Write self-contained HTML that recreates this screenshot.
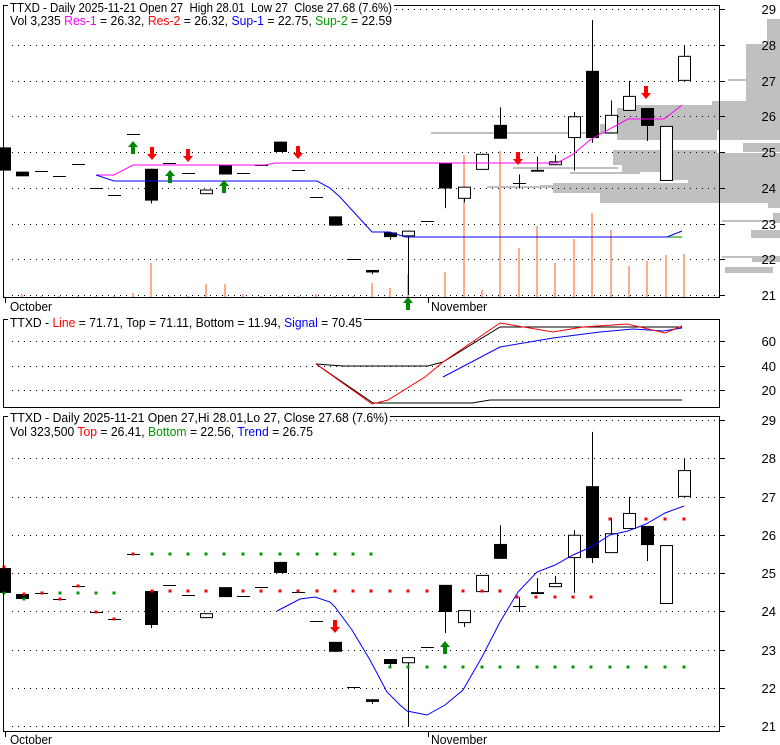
<!DOCTYPE html>
<html><head><meta charset="utf-8"><style>
html,body{margin:0;padding:0;background:#fff;}
svg{display:block;font-family:"Liberation Sans",Arial,sans-serif;}
</style></head><body>
<svg id="s" width="780" height="745" viewBox="0 0 780 745" xmlns="http://www.w3.org/2000/svg">
<g id="g0" fill="#c0c0c0">
<rect x="767" y="19" width="13" height="25"/>
<rect x="746" y="44" width="34" height="57"/>
<rect x="728" y="79" width="18" height="2"/>
<rect x="712" y="101" width="68" height="4"/>
<rect x="632" y="105" width="148" height="3"/>
<rect x="617" y="108" width="163" height="22"/>
<rect x="600" y="124" width="20" height="8"/>
<rect x="617" y="130" width="100" height="10"/>
<rect x="720" y="130" width="60" height="10"/>
<rect x="743" y="143" width="37" height="9"/>
<rect x="613" y="150" width="104" height="3"/>
<rect x="613" y="153" width="167" height="12"/>
<rect x="622" y="165" width="158" height="7"/>
<rect x="673" y="172" width="107" height="8"/>
<rect x="688" y="180" width="92" height="3"/>
<rect x="553" y="183" width="227" height="10"/>
<rect x="600" y="193" width="180" height="10"/>
<rect x="768" y="203" width="12" height="5"/>
<rect x="773" y="213" width="7" height="10"/>
<rect x="722" y="220" width="51" height="2"/>
<rect x="751" y="230" width="29" height="8"/>
<rect x="722" y="256" width="58" height="2"/>
<rect x="752" y="258" width="28" height="4"/>
<rect x="725" y="267" width="48" height="6"/>
<rect x="431" y="132" width="220" height="2"/>
<rect x="513" y="167" width="105" height="2"/>
<rect x="570" y="172" width="70" height="2"/>
<rect x="487" y="186" width="113" height="2"/>
<rect x="540" y="185" width="20" height="3"/>
</g>
<g id="main"></g>
<g font-size="13" fill="#000">
<rect x="8" y="0" width="386" height="12" fill="#fff"/>
<text x="10" y="12" textLength="382" lengthAdjust="spacingAndGlyphs" xml:space="preserve">TTXD - Daily 2025-11-21 Open 27  High 28.01  Low 27  Close 27.68 (7.6%)</text>
<text x="10" y="25" textLength="382" lengthAdjust="spacingAndGlyphs">Vol 3,235 <tspan fill="#ff00ff">Res-1</tspan> = 26.32, <tspan fill="#ff0000">Res-2</tspan> = 26.32, <tspan fill="#0000ff">Sup-1</tspan> = 22.75, <tspan fill="#009900">Sup-2</tspan> = 22.59</text>
<rect x="8" y="314" width="356" height="12" fill="#fff"/>
<text x="10" y="327" textLength="352" lengthAdjust="spacingAndGlyphs">TTXD - <tspan fill="#ff0000">Line</tspan> = 71.71, Top = 71.11, Bottom = 11.94, <tspan fill="#0000ff">Signal</tspan> = 70.45</text>
<rect x="8" y="410" width="382" height="12" fill="#fff"/>
<text x="10" y="422" textLength="378" lengthAdjust="spacingAndGlyphs">TTXD - Daily 2025-11-21 Open 27,Hi 28.01,Lo 27, Close 27.68 (7.6%)</text>
<text x="10" y="436" textLength="303" lengthAdjust="spacingAndGlyphs">Vol 323,500 <tspan fill="#ff0000">Top</tspan> = 26.41, <tspan fill="#009900">Bottom</tspan> = 22.56, <tspan fill="#0000ff">Trend</tspan> = 26.75</text>
<text x="10" y="311" textLength="42" lengthAdjust="spacingAndGlyphs">October</text>
<text x="431" y="311" textLength="56" lengthAdjust="spacingAndGlyphs">November</text>
<text x="10" y="744" textLength="42" lengthAdjust="spacingAndGlyphs">October</text>
<text x="431" y="744" textLength="56" lengthAdjust="spacingAndGlyphs">November</text>
</g>
<g id="lab" font-size="13" text-anchor="end"></g>
</svg>
<script>
var NS="http://www.w3.org/2000/svg",M=document.getElementById('main'),L=document.getElementById('lab');
function el(t,a,p){var e=document.createElementNS(NS,t);for(var k in a)e.setAttribute(k,a[k]);(p||M).appendChild(e);return e;}
function yt(p){return 9+(29-p)*35.75;}
function yb(p){return 420+(29-p)*38.25;}
for(var p=21;p<=29;p++){
 el('line',{x1:12,x2:717,y1:Math.round(yt(p))+.5,y2:Math.round(yt(p))+.5,stroke:'#000','stroke-dasharray':'1,5'});
 el('line',{x1:12,x2:717,y1:Math.round(yb(p))+.5,y2:Math.round(yb(p))+.5,stroke:'#000','stroke-dasharray':'1,5'});
 el('line',{x1:719,x2:725,y1:Math.round(yt(p))+.5,y2:Math.round(yt(p))+.5,stroke:'#000'});
 el('line',{x1:719,x2:725,y1:Math.round(yb(p))+.5,y2:Math.round(yb(p))+.5,stroke:'#000'});
 var t=el('text',{x:776,y:Math.round(yt(p))+5},L);t.textContent=p;
 t=el('text',{x:776,y:Math.round(yb(p))+5},L);t.textContent=p;
}
[[60,341],[40,366],[20,390]].forEach(function(a){
 el('line',{x1:12,x2:717,y1:a[1]+.5,y2:a[1]+.5,stroke:'#000','stroke-dasharray':'1,5'});
 el('line',{x1:719,x2:725,y1:a[1]+.5,y2:a[1]+.5,stroke:'#000'});
 var t=el('text',{x:776,y:a[1]+5},L);t.textContent=a[0];
});
var vol=[296,294,296,296,296,296,296,293,263,296,296,284,284,294,296,296,296,294,296,296,283,288,274,297,272,155,290,151,248,226,263,239,213,230,266,261,255,254];
function X(i){return Math.round(4+18.38*i);}
vol.forEach(function(v,i){el('rect',{x:X(i)-1,y:v,width:2,height:297-v,fill:'#ffab8c'});});
var C=[[25.13,24.48],[24.45,24.32],[24.48,24.48],[24.32,24.32],[24.66,24.66],[23.98,23.98],[23.8,23.8],[25.5,25.5],[24.53,23.64,0,23.56],[24.69,24.69],[24.42,24.42],[23.82,23.95],[24.63,24.37],[24.4,24.4],[24.63,24.63],[25.29,25.0],[24.5,24.5],[23.74,23.74],[23.2,22.94],[22.02,22.02],[21.7,21.63,0,21.58],[22.75,22.62,0,22.55],[22.64,22.8,0,21.0],[23.07,23.07],[24.69,23.98,0,23.43],[23.69,24.03,0,23.59],[24.5,24.95],[25.76,25.37,26.25],[24.14,24.14,24.37,23.98],[24.45,24.5,24.87],[24.63,24.74,24.92],[25.39,26.0,26.12,24.48],[27.27,25.39,28.69,25.26],[25.52,26.04,26.44],[26.15,26.57,26.99],[26.23,25.73,0,25.31],[24.19,25.73],[26.99,27.69,27.98]];
function candles(Y){
 C.forEach(function(c,i){
  var x=X(i),o=c[0],cl=c[1],h=c[2]||Math.max(o,cl),l=c[3]||Math.min(o,cl);
  el('line',{x1:x+.5,x2:x+.5,y1:Y(h),y2:Y(l),stroke:'#000'});
  var t=Y(Math.max(o,cl)),b=Y(Math.min(o,cl));
  if(b-t<1.5){el('line',{x1:x-6,x2:x+7,y1:Math.round(t)+.5,y2:Math.round(t)+.5,stroke:'#000'});}
  else if(cl<o) el('rect',{x:x-6,y:t,width:13,height:b-t,fill:'#000'});
  else el('rect',{x:x-6+.5,y:t+.5,width:12,height:b-t-1,fill:'#fff',stroke:'#000'});
 });
}
candles(yt);candles(yb);
function pl(pts,col,w){el('polyline',{points:pts,fill:'none',stroke:col,'stroke-width':w||1});}
pl('96,175 114,175 133,165 265,165 275,163 557,163 572,155 590,140 604,132 617,125 628,119 664,119 682,105','#ff00ff');
pl('96,175 114,181 317,181 330,188 340,197 372,232 390,232 405,237 667,237','#0000ff');
pl('667,237 682,237','#008800');pl('667,237 682,231','#0000ff');
function up(x,y,col){el('path',{d:'M'+x+' '+y+'l-5 6h3v7h4v-7h3z',fill:col||'#008800'});}
function dn(x,y,col){el('path',{d:'M'+x+' '+(y+13)+'l-5 -6h3v-7h4v7h3z',fill:col||'#ff0000'});}
up(133,141);up(170,170);up(224,180);up(408,297);
dn(152,147);dn(188,149);dn(298,146);dn(518,152);dn(646,86);
pl('316,364 343,366 428,366 443,362 500,327 682,327','#000');
pl('316,364 373,403 472,403 490,400 682,400','#000');
pl('443,377 500,347 553,338 600,332 633,329 663,331 682,328','#0000ff');
pl('316,364 372,404 388,400 425,377 443,362 500,323 553,332 583,327 627,324 665,333 682,326','#ff0000');
function dot(x,y,c){el('rect',{x:x-1.5,y:y-1.5,width:3,height:3,fill:c});}
[152,170,188,206,224,243,261,280,298,317,335,353,371].forEach(function(x){dot(x,554,'#009900');});
[170,188,206,243,261,280,298,317,335,353,371,390,408,427,463,482,500].forEach(function(x){dot(x,591,'#ff0000');});
[517,536,555,573,591].forEach(function(x){dot(x,597,'#ff0000');});
[610,646,665,684].forEach(function(x){dot(x,519,'#ff0000');});
[408,427,445,463,482,500,518,537,555,573,591,610,628,646,665,684].forEach(function(x){dot(x,667,'#009900');});
[60,78,96,114,4].forEach(function(x){dot(x,593,'#009900');});dot(24,599,'#009900');
[[4,567],[24,594],[42,593],[60,599],[78,586],[96,612],[114,619],[133,554],[152,591]].forEach(function(a){dot(a[0],a[1],'#ff0000');});
dot(390,667,'#009900');
pl('277,611 300,599 315,597 330,602 335,607 352,630 370,660 387,692 400,705 407,711 427,715 445,705 463,690 482,657 500,622 518,592 537,572 555,565 573,555 591,547 610,535 628,531 646,524 665,513 684,506','#0000ff');
dn(335,620);up(445,641);
[[3,5,716,292],[3,319,716,88],[3,416,716,315]].forEach(function(r){el('rect',{x:r[0]+.5,y:r[1]+.5,width:r[2],height:r[3],fill:'none',stroke:'#000'});});
el('line',{x1:5.5,x2:5.5,y1:297,y2:303,stroke:'#000'});el('line',{x1:428.5,x2:428.5,y1:297,y2:303,stroke:'#000'});
el('line',{x1:5.5,x2:5.5,y1:731,y2:737,stroke:'#000'});el('line',{x1:428.5,x2:428.5,y1:731,y2:737,stroke:'#000'});
var s=document.getElementById('s');s.appendChild(s.children[2]);s.appendChild(L);
</script>
</body></html>
